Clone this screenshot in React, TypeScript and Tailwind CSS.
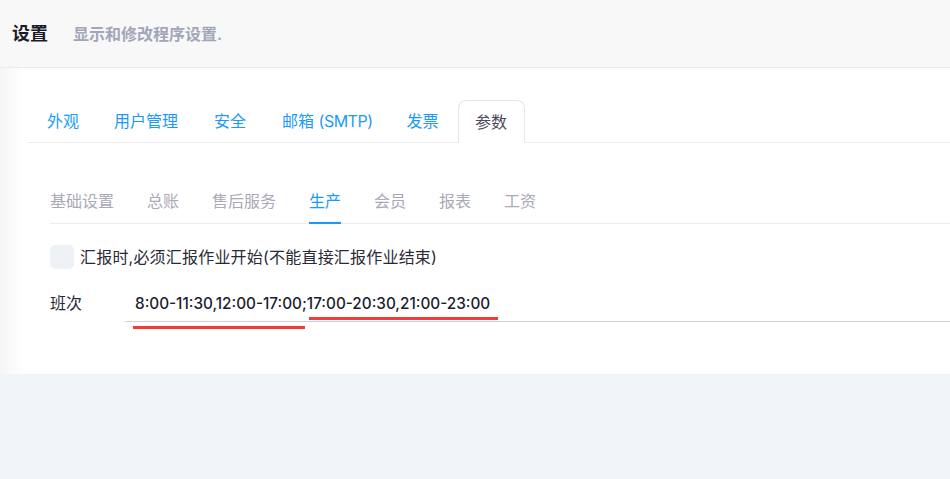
import React from "react";

const subTabs = ["基础设置", "总账", "售后服务", "生产", "会员", "报表", "工资"];

export default function App() {
  const font = { fontFamily: 'Inter, "Noto Sans CJK SC", sans-serif' };
  return (
    <div className="w-[950px] h-[479px] bg-[#f2f5f8] overflow-hidden" style={font}>
      <div className="h-[68px] bg-[#f8f8f8] border-b border-[#ebebeb] flex items-center pl-3 gap-[25px]">
        <span className="text-[18px] font-bold text-[#1c1c28]">设置</span>
        <span className="text-[16px] font-semibold text-[#a3a6ba]">显示和修改程序设置.</span>
      </div>
      <div className="h-[306px] bg-white relative">
        <div className="absolute left-0 top-0 bottom-0 w-[24px] bg-gradient-to-r from-[#f6f6f6] to-white" />
        <div className="relative pt-[32px] pl-[27px]">
          <div className="flex items-end h-[43px] border-b border-[#ebedf3]">
            <div className="flex items-center h-[42px] pl-[20px] text-[16px] text-[#1a9bfc]">
              <span className="mr-[35px]">外观</span>
              <span className="mr-[36px]">用户管理</span>
              <span className="mr-[36px]">安全</span>
              <span className="mr-[34px]">
                邮箱 <span className="tracking-[-0.5px]">(SMTP)</span>
              </span>
              <span>发票</span>
            </div>
            <div className="ml-[19px] h-[43px] w-[67px] -mb-px border border-b-white border-[#e5e5f0] rounded-t-[8px] bg-white flex items-center justify-center text-[16px] text-[#4a4a5a]">
              参数
            </div>
          </div>
          <div className="pl-[23px] pt-[36px]">
            <div className="flex items-end border-b border-[#eeeeee] h-[45px] gap-[33px]">
              {subTabs.map((t) => (
                <div
                  key={t}
                  className={`h-[45px] flex items-center pt-[1px] text-[16px] ${t === "生产" ? "text-[#1a9bfc] border-b-2 border-[#1a9bfc] -mb-px" : "text-[#a9a9b8]"}`}
                >
                  {t}
                </div>
              ))}
            </div>
            <div className="flex items-center mt-[20px] h-[25px]">
              <div className="w-[24px] h-[24px] rounded-[5px] bg-[#eef1f5]" />
              <span className="ml-[6px] text-[16px] text-[#2a2a36] tracking-[0.2px]">汇报时,必须汇报作业开始(不能直接汇报作业结束)</span>
            </div>
            <div className="flex items-end mt-[19px]">
              <span className="w-[75px] text-[16px] text-[#2a2a36] pb-[7px]">班次</span>
              <div className="flex-1 relative border-b border-[#d0d0d8] h-[34px] pl-[10px] flex items-center">
                <span className="text-[15.3px] font-medium text-[#1c1c2e]">
                  8:00-11:30,12:00-17:00;17:00-20:30,21:00-23:00
                </span>
                <div className="absolute left-[184px] top-[29px] w-[189px] h-[3px] bg-[#f53a3a]" />
                <div className="absolute left-[8px] top-[38px] w-[172px] h-[3px] bg-[#f53a3a]" />
              </div>
            </div>
          </div>
        </div>
      </div>
    </div>
  );
}
